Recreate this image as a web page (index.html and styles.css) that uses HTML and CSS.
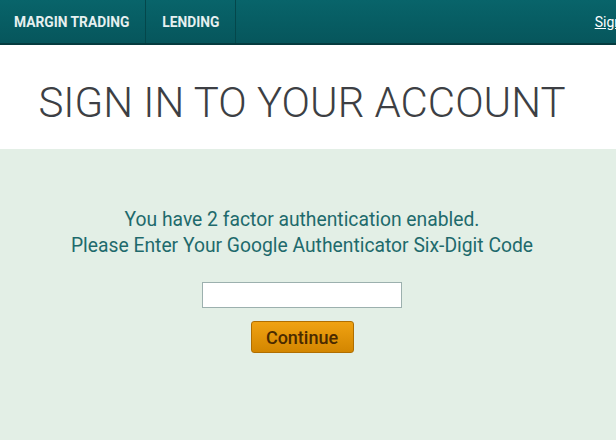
FILE: index.html
```html
<!DOCTYPE html>
<html lang="en">
    <head>
        <meta charset="UTF-8" />
        <meta name="viewport" content="width=device-width, initial-scale=1.0" />
        <title>Sign In</title>
        <link rel="stylesheet" href="styles.css">
    </head>
    <body>
        <div class="topbar">
            <a class="nav-item first" href="#">Margin Trading</a>
            <a class="nav-item" href="#">Lending</a>
            <a class="sign-link" href="#">Sign In</a>
        </div>

        <div class="title-box">
            <h1>SIGN IN TO YOUR ACCOUNT</h1>
        </div>

        <div class="auth-box">
            <p class="auth-msg">
                You have 2 factor authentication enabled.<br>
                Please Enter Your Google Authenticator Six-Digit Code
            </p>
            <form id="auth-form" class="auth-form">
                <input type="text" id="code" name="code" class="code-input" autofocus />
                <button type="submit" class="btn-continue">Continue</button>
            </form>
        </div>
    </body>
</html>
```

FILE: styles.css
```css
body {
    font-family: Roboto, Arial, sans-serif;
    margin: 0;
    background-color: #e3efe6;
    overflow: hidden;
}

.topbar {
    display: flex;
    align-items: stretch;
    width: 660px;
    height: 43px;
    background: linear-gradient(#08646a, #06565c);
    border-bottom: 2px solid #053b3f;
}

.nav-item {
    display: flex;
    align-items: center;
    padding: 0 16px;
    color: #e6f0f0;
    font-size: 13.8px;
    font-weight: bold;
    text-transform: uppercase;
    text-decoration: none;
    border-right: 1px solid #04474b;
}

.nav-item.first {
    padding-left: 14px;
}

.sign-link {
    margin-left: auto;
    align-self: center;
    padding-right: 23px;
    color: #ffffff;
    font-size: 14px;
    text-decoration: underline;
}

.title-box {
    background: #ffffff;
    height: 104px;
    padding: 10px 12px 0 0;
    box-sizing: border-box;
    display: flex;
    align-items: center;
    justify-content: center;
}

h1 {
    margin: 0;
    font-size: 42px;
    font-weight: 300;
    color: #3d3f44;
}

.auth-box {
    padding: 58px 12px 0 0;
    text-align: center;
}

.auth-msg {
    margin: 0;
    font-size: 19.3px;
    line-height: 26px;
    color: #1e6a6c;
}

.auth-form {
    display: flex;
    flex-direction: column;
    align-items: center;
    gap: 13px;
    margin-top: 23px;
}

.code-input {
    width: 198px;
    height: 24px;
    padding: 0;
    margin: 0;
    border: 1px solid #9cb0ae;
    background: #ffffff;
    outline: none;
}

.btn-continue {
    width: 103px;
    height: 32px;
    padding: 0;
    font-family: Roboto, Arial, sans-serif;
    font-size: 18px;
    font-weight: 500;
    color: #4a2a00;
    background: linear-gradient(#f0a212, #d38600);
    border: 1px solid #b06e00;
    border-radius: 3px;
    cursor: pointer;
}
```
